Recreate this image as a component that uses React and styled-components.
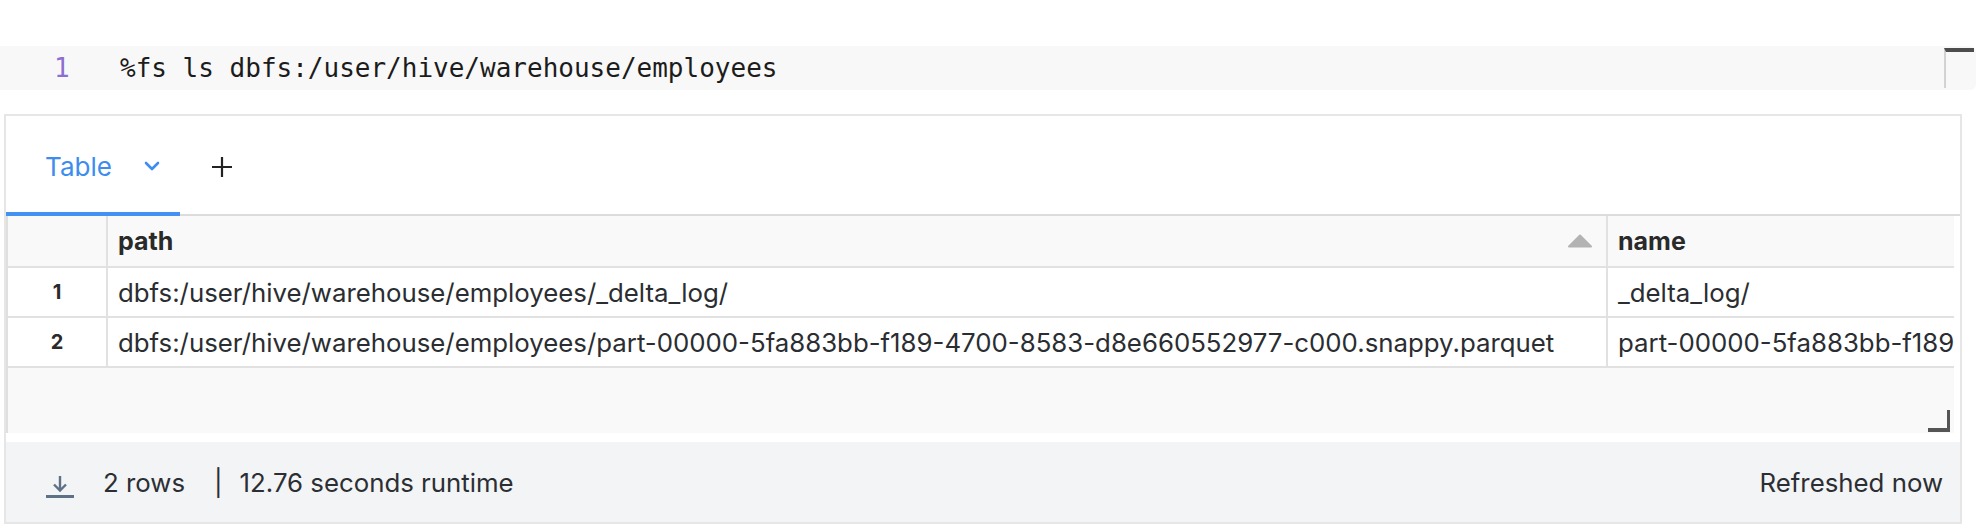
import React from "react";
import styled, { createGlobalStyle } from "styled-components";

const GlobalStyle = createGlobalStyle`
  html, body { margin: 0; padding: 0; background: #ffffff; }
  body { font-family: Inter, "Noto Sans", sans-serif; color: #1f2226; }
  * { box-sizing: border-box; }
`;

const Page = styled.div`
  padding: 46px 12px 6px 0;
  width: 1988px;
`;

const CodeCell = styled.div`
  position: relative;
  display: flex;
  align-items: center;
  height: 44px;
  background: #f8f8f8;
  border-radius: 0 6px 6px 0;
`;

const Gutter = styled.div`
  width: 120px;
  padding-left: 54px;
  font-family: "DejaVu Sans Mono", monospace;
  font-size: 26px;
  color: #8c6fd2;
`;

const Code = styled.div`
  font-family: "DejaVu Sans Mono", monospace;
  font-size: 26px;
  color: #1c1c1c;
  white-space: pre;
`;

const ScrollMark = styled.div`
  position: absolute;
  top: 2px;
  right: 2px;
  width: 30px;
  height: 40px;
  border-left: 2px solid #d2d2d2;
  border-top: 4px solid #4d4d4d;
`;

const ResultBox = styled.div`
  margin: 24px 14px 0 4px;
  border: 2px solid #e6e6e6;
  display: flex;
  flex-direction: column;
  background: #ffffff;
`;

const TabBar = styled.div`
  display: flex;
  align-items: stretch;
  height: 100px;
  border-bottom: 2px solid #dcdcdc;
`;

const Tab = styled.div`
  display: flex;
  align-items: center;
  width: 174px;
  height: 100px;
  margin-bottom: -2px;
  padding: 4px 0 0 39px;
  border-bottom: 4px solid #4391f0;
  color: #3d8def;
  font-size: 26px;
  gap: 32px;
`;

const AddButton = styled.div`
  display: flex;
  align-items: center;
  padding: 4px 0 0 31px;
  color: #222;
`;

const TableArea = styled.div`
  position: relative;
  height: 217px;
  margin-right: 6px;
  background: #f9f9f9;
  border-left: 2px solid #e0e0e0;
  overflow: hidden;
`;

const GridRow = styled.div`
  display: grid;
  grid-template-columns: 100px 1500px 700px;
  height: ${(p) => p.$h}px;
  background: ${(p) => (p.$head ? "#f9f9f9" : "#ffffff")};
  border-bottom: 2px solid #e1e1e1;
`;

const Cell = styled.div`
  display: flex;
  align-items: center;
  justify-content: ${(p) => (p.$center ? "center" : "flex-start")};
  padding: 0 ${(p) => (p.$center ? 0 : 13)}px 0 ${(p) => (p.$center ? 0 : 10)}px;
  border-right: ${(p) => (p.$last ? "none" : "2px solid #e1e1e1")};
  white-space: nowrap;
  overflow: hidden;
  font-size: ${(p) => (p.$num ? 20 : p.$bold ? 25 : 25.8)}px;
  font-weight: ${(p) => (p.$bold || p.$num ? 700 : 400)};
  color: ${(p) => (p.$bold || p.$num ? "#2a2a2a" : "#2a2d31")};
`;

const HeadLabel = styled.span`
  flex: 1;
`;

const ResizeHandle = styled.div`
  position: absolute;
  right: 4px;
  bottom: 1px;
  width: 22px;
  height: 22px;
  border-right: 3px solid #555;
  border-bottom: 4px solid #555;
`;

const Gap = styled.div`
  height: 9px;
`;

const Footer = styled.div`
  display: flex;
  align-items: center;
  height: 80px;
  padding: 0 17px 0 40px;
  background: #f3f4f6;
  font-size: 25.8px;
  color: #2b2f33;
`;

const IconWrap = styled.span`
  display: flex;
  margin: 10px 29px 0 0;
`;

const Sep = styled.span`
  margin: 0 17px 0 29px;
`;

const Spacer = styled.div`
  flex: 1;
`;

const rows = [
  { n: 1, path: "dbfs:/user/hive/warehouse/employees/_delta_log/", name: "_delta_log/" },
  {
    n: 2,
    path: "dbfs:/user/hive/warehouse/employees/part-00000-5fa883bb-f189-4700-8583-d8e660552977-c000.snappy.parquet",
    name: "part-00000-5fa883bb-f189-4700-8583-d8e660552977-c000.snappy.parquet",
  },
];

export default function App() {
  return (
    <>
      <GlobalStyle />
      <Page>
        <CodeCell>
          <Gutter>1</Gutter>
          <Code>%fs ls dbfs:/user/hive/warehouse/employees</Code>
          <ScrollMark />
        </CodeCell>
        <ResultBox>
          <TabBar>
            <Tab>
              <span>Table</span>
              <svg width="16" height="10" viewBox="0 0 16 10">
                <path d="M2 2 L8 8 L14 2" fill="none" stroke="#3d8def" strokeWidth="2.6" strokeLinecap="round" strokeLinejoin="round" />
              </svg>
            </Tab>
            <AddButton>
              <svg width="22" height="22" viewBox="0 0 22 22">
                <path d="M11 1 V21 M1 11 H21" stroke="#222" strokeWidth="2.2" />
              </svg>
            </AddButton>
          </TabBar>
          <TableArea>
            <GridRow $head $h={52}>
              <Cell $center />
              <Cell $bold>
                <HeadLabel>path</HeadLabel>
                <svg width="26" height="14" viewBox="0 0 26 14">
                  <path d="M13 1.5 L24 12.5 H2 Z" fill="#b3b3b3" stroke="#b3b3b3" strokeWidth="2" strokeLinejoin="round" />
                </svg>
              </Cell>
              <Cell $bold $last>name</Cell>
            </GridRow>
            {rows.map((r) => (
              <GridRow key={r.n} $h={50}>
                <Cell $center $num>{r.n}</Cell>
                <Cell>{r.path}</Cell>
                <Cell $last>{r.name}</Cell>
              </GridRow>
            ))}
            <ResizeHandle />
          </TableArea>
          <Gap />
          <Footer>
            <IconWrap>
              <svg width="28" height="23" viewBox="0 0 28 23">
                <path d="M14 0 V14 M8 8.5 L14 14.5 L20 8.5" fill="none" stroke="#5f7187" strokeWidth="2.4" />
                <rect x="0" y="19" width="28" height="3" fill="#5f7187" />
              </svg>
            </IconWrap>
            <span>2 rows</span>
            <Sep>|</Sep>
            <span>12.76 seconds runtime</span>
            <Spacer />
            <span>Refreshed now</span>
          </Footer>
        </ResultBox>
      </Page>
    </>
  );
}
